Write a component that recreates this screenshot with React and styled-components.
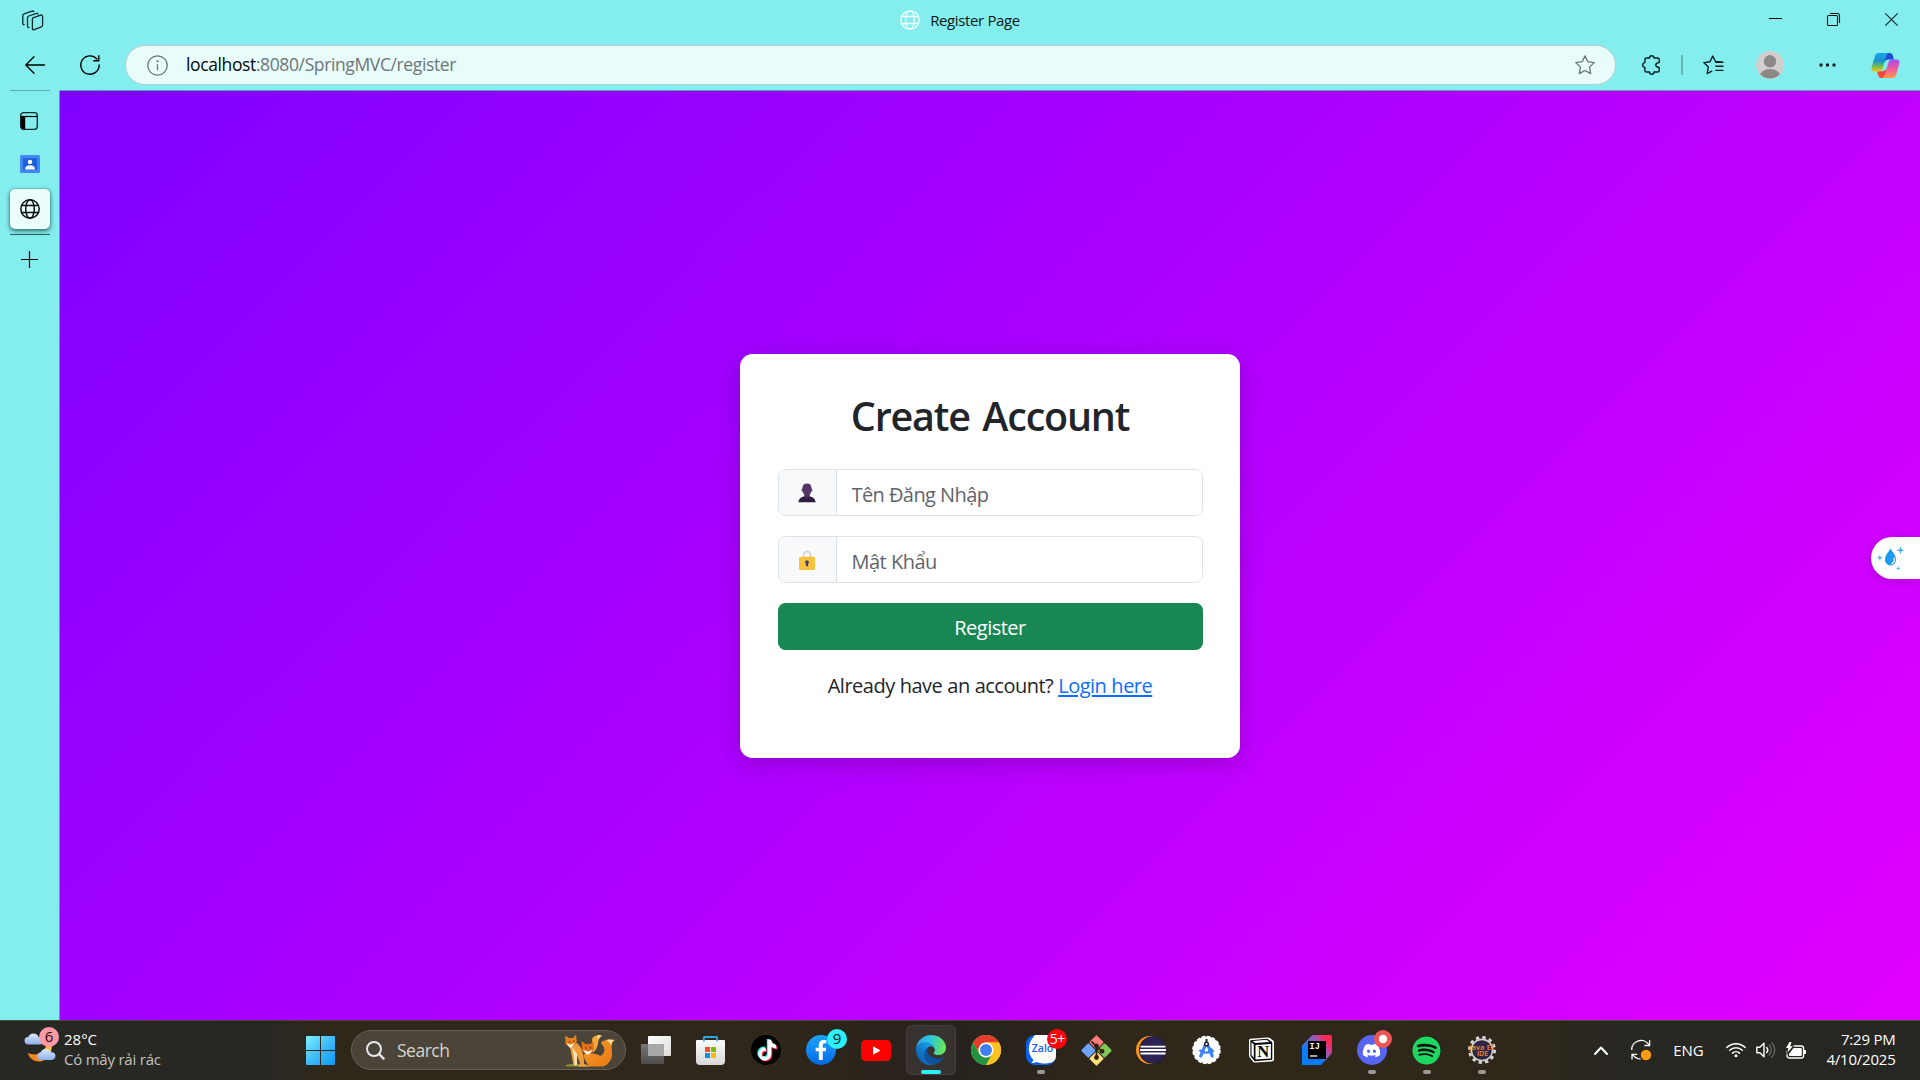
import React from "react";
import styled, { createGlobalStyle } from "styled-components";
import { FaTiktok, FaFacebookF, FaDiscord, FaSpotify } from "react-icons/fa";

const GlobalStyle = createGlobalStyle`
  *, *::before, *::after { box-sizing: border-box; }
  body {
    margin: 0;
    font-family: "Open Sans", "Noto Sans", sans-serif;
    overflow: hidden;
  }
  svg { display: block; flex: none; overflow: visible; }
`;

const Screen = styled.div`
  width: 1920px;
  height: 1080px;
  display: flex;
  flex-direction: column;
  background: #84eeee;
`;

/* ---------- browser chrome ---------- */

const TitleBar = styled.header`
  height: 40px;
  display: grid;
  grid-template-columns: 1fr auto 1fr;
`;

const TitleLeft = styled.div`
  padding: 10px 0 0 22px;
`;

const TabTitle = styled.div`
  display: flex;
  align-items: center;
  gap: 10px;
  height: 40px;
  font-size: 15px;
  letter-spacing: -0.37px;
  color: #0b1717;
`;

const TabLabel = styled.span`
  padding-bottom: 1px;
`;

const WindowControls = styled.div`
  display: flex;
  justify-content: flex-end;
`;

const WindowButton = styled.div`
  width: ${(p) => p.$w || 57.5}px;
  height: 39px;
  display: flex;
  align-items: center;
  justify-content: center;
`;

const Toolbar = styled.div`
  height: 50px;
  display: flex;
  align-items: center;
  padding: 0 5px 0 7px;
`;

const ToolSlot = styled.div`
  width: ${(p) => p.$w || 57}px;
  height: 40px;
  display: flex;
  align-items: center;
  justify-content: center;
`;

const AddressBar = styled.div`
  flex: 1;
  height: 40px;
  margin: 0 7px 0 9px;
  padding: 0 20px 0 21px;
  display: flex;
  align-items: center;
  border: 1px solid #b9cdcd;
  border-radius: 20px;
  background: #e8fcfc;
`;

const Url = styled.div`
  flex: 1;
  margin-left: 18px;
  font-size: 17.5px;
  line-height: 37px;
  padding-bottom: 1px;
  letter-spacing: -0.38px;
  color: #6d7575;
`;

const Host = styled.span`
  color: #050808;
`;

const ToolDivider = styled.div`
  width: 2px;
  height: 20px;
  margin: 0 1px;
  background: #66b6b8;
`;

const Body = styled.div`
  flex: 1;
  display: flex;
`;

const TabStrip = styled.nav`
  width: 59px;
  display: flex;
  flex-direction: column;
  align-items: center;
`;

const StripLine = styled.div`
  width: 40px;
  height: 1px;
  margin-left: 1px;
  margin-top: ${(p) => p.$gap || 0}px;
  background: ${(p) => p.$color || "#5fabac"};
`;

const StripSlot = styled.div`
  width: 60px;
  height: ${(p) => p.$h}px;
  padding-right: ${(p) => p.$shift || 0}px;
  display: flex;
  align-items: center;
  justify-content: center;
`;

const ActiveTab = styled.div`
  width: 40px;
  height: 40px;
  margin: 12px 0 0 1px;
  display: flex;
  align-items: center;
  justify-content: center;
  border-radius: 5px;
  background: #ecfdfd;
  box-shadow: 0 2px 5px rgba(0, 40, 45, 0.65), 0 0 2px rgba(0, 40, 45, 0.4);
`;

/* ---------- page ---------- */

const Page = styled.main`
  position: relative;
  flex: 1;
  display: flex;
  align-items: center;
  justify-content: center;
  border-top: 1px solid #5c9fae;
  border-left: 1px solid #5c9fae;
  background: linear-gradient(135deg, #7f00ff, #e100ff) padding-box;
`;

const Card = styled.form`
  width: 500px;
  height: 404px;
  padding: 37.5px;
  display: flex;
  flex-direction: column;
  border-radius: 12.5px;
  background: #fff;
  box-shadow: 0 5px 25px rgba(0, 0, 0, 0.2);
`;

const Heading = styled.h2`
  height: 48px;
  margin: 0 0 30px;
  font-size: 39.5px;
  font-weight: 600;
  line-height: 51px;
  letter-spacing: -1.2px;
  word-spacing: 3.5px;
  text-align: center;
  color: #212529;
`;

const Field = styled.div`
  height: 47px;
  margin-bottom: 20px;
  display: flex;
  border: 1px solid #dee2e6;
  border-radius: 7.5px;
  overflow: hidden;
`;

const Addon = styled.div`
  width: 58px;
  padding-top: 1px;
  display: flex;
  align-items: center;
  justify-content: center;
  border-right: 1px solid #dee2e6;
  background: #f8f9fa;
`;

const Input = styled.input`
  flex: 1;
  min-width: 0;
  padding: 3px 15px 0;
  border: 0;
  outline: 0;
  background: #fff;
  font: 20px "Open Sans", "Noto Sans", sans-serif;
  letter-spacing: ${(p) => p.$spacing}px;
  &::placeholder {
    color: #5f6469;
    opacity: 1;
  }
`;

const SubmitButton = styled.button`
  height: 47px;
  padding: 2px 0 0;
  border: 0;
  border-radius: 7.5px;
  background: #198754;
  color: #fff;
  font: 20px "Open Sans", "Noto Sans", sans-serif;
  letter-spacing: -0.5px;
`;

const Prompt = styled.p`
  margin: 20px 0 0;
  font-size: 20px;
  line-height: 31px;
  letter-spacing: -0.5px;
  word-spacing: 0.3px;
  text-align: center;
  white-space: nowrap;
  color: #212529;
`;

const Link = styled.a`
  color: #0d6efd;
  text-decoration: underline;
  text-decoration-thickness: 2px;
  text-underline-offset: 2px;
`;

const FloatingTool = styled.div`
  position: absolute;
  right: 0;
  top: 446px;
  width: 49px;
  height: 42px;
  padding: 8px 0 0 4px;
  border-radius: 21px 0 0 21px;
  background: #fff;
  box-shadow: 0 2px 8px rgba(0, 0, 0, 0.18);
`;

/* ---------- taskbar ---------- */

const Taskbar = styled.footer`
  height: 60px;
  padding-bottom: 1px;
  display: flex;
  align-items: center;
  border-top: 1px solid #4a4640;
  background: linear-gradient(90deg, #272723 0, #272723 260px, #2f281a 330px, #2e261a 800px, #28221e 940px, #29231d 1010px, #2f271a 1120px, #2f271a 1520px, #282722 1620px, #262622 100%);
  color: #fff;
`;

const Weather = styled.div`
  width: 280px;
  padding-left: 24px;
  display: flex;
  align-items: center;
`;

const WeatherIcon = styled.div`
  position: relative;
  width: 40px;
  height: 40px;
`;

const WeatherBadge = styled.div`
  position: absolute;
  left: 15px;
  top: -3px;
  width: 20px;
  height: 20px;
  border-radius: 50%;
  background: #ff99a4;
  color: #1b0d0f;
  font-size: 15px;
  line-height: 19px;
  text-align: center;
`;

const Lines = styled.div`
  display: flex;
  flex-direction: column;
  padding-bottom: 3px;
  font-size: 15px;
  line-height: 20px;
  letter-spacing: ${(p) => p.$spacing || 0}px;
  text-align: ${(p) => p.$align || "left"};
  white-space: nowrap;
`;

const Muted = styled.span`
  color: #c3c2c0;
  letter-spacing: -0.22px;
`;

const StartButton = styled.div`
  width: 71px;
  padding-left: 26px;
`;

const SearchBox = styled.div`
  width: 275px;
  height: 40px;
  padding: 0 10px 0 14px;
  display: flex;
  align-items: center;
  border: 1px solid #655f54;
  border-radius: 20px;
  background: #4a4439;
  font-size: 17.5px;
  letter-spacing: -0.5px;
  color: #d6d3ce;
`;

const SearchLabel = styled.span`
  flex: 1;
  margin-left: 12px;
`;

const Apps = styled.div`
  display: flex;
  margin-left: 2px;
`;

const AppSlot = styled.div`
  width: 55.1px;
  height: 50px;
  display: flex;
  justify-content: center;
`;

const AppTile = styled.div`
  position: relative;
  width: 50px;
  height: 50px;
  display: flex;
  align-items: center;
  justify-content: center;
  border-radius: 6px;
  background: ${(p) => (p.$active ? "#38322e" : "transparent")};
  box-shadow: ${(p) => (p.$active ? "inset 0 0 0 1px #443e39" : "none")};
`;

const Indicator = styled.div`
  position: absolute;
  left: 50%;
  bottom: 1px;
  width: ${(p) => (p.$active ? 20 : 8)}px;
  height: 4px;
  transform: translateX(-50%);
  border-radius: 2px;
  background: ${(p) => (p.$active ? "#2cf0fb" : "#9d9992")};
`;

const AppBadge = styled.div`
  position: absolute;
  left: 31px;
  top: 4px;
  width: 20px;
  height: 20px;
  border-radius: 50%;
  background: ${(p) => p.$bg};
  color: ${(p) => p.$fg};
  font-size: ${(p) => p.$size || 15}px;
  line-height: 19px;
  letter-spacing: -0.5px;
  text-align: center;
`;

const LiveBadge = styled.div`
  position: absolute;
  left: 27px;
  top: 5px;
`;

const Disc = styled.div`
  position: relative;
  width: ${(p) => p.$size || 30}px;
  height: ${(p) => p.$size || 30}px;
  display: flex;
  align-items: center;
  justify-content: center;
  border-radius: 50%;
  background: ${(p) => p.$bg};
  color: #fff;
`;

const NoteLayer = styled.div`
  position: absolute;
  left: ${(p) => p.$x}px;
  top: ${(p) => p.$y}px;
  color: ${(p) => p.$color};
`;

const Tray = styled.div`
  margin-left: auto;
  padding-right: 24.5px;
  display: flex;
  align-items: center;
`;

const TraySlot = styled.div`
  width: ${(p) => p.$w}px;
  display: flex;
  align-items: center;
  justify-content: center;
  font-size: 15px;
`;

const ClockSlot = styled.div`
  width: 81px;
  display: flex;
  justify-content: flex-end;
`;

/* ---------- drawings ---------- */

const Globe = ({ color, width = 1.5 }) => (
  <svg width="20" height="20" viewBox="0 0 20 20" fill="none" stroke={color} strokeWidth={width}>
    <circle cx="10" cy="10" r="9.2" />
    <ellipse cx="10" cy="10" rx="4.3" ry="9.2" />
    <path d="M1.5 6.5h17M1.5 13.5h17" />
  </svg>
);

const WorkspacesIcon = () => (
  <svg width="22" height="22" viewBox="0 0 22 22" fill="none" stroke="#0c2a2b" strokeWidth="1.3" strokeLinejoin="round" strokeLinecap="round">
    <path d="M11.400 7.700 18.800 5.100c1-.3 1.800.2 1.800 1.200v8.800c0 .8-.4 1.400-1.200 1.700l-7.200 2.900c-1 .4-1.800-.1-1.800-1.100V9.300c0-.8.3-1.300 1-1.600z" />
    <path d="M16 4.100c-.2-.7-.8-1-1.600-.7L6.800 6c-.8.3-1.300 1-1.300 1.800v8.600c0 .8.700 1.300 1.500 1.100" />
    <path d="M11.700 1.700c-.3-.7-.9-.9-1.700-.6L2.100 3.800C1.300 4.100.8 4.800.8 5.600v8c0 .8.6 1.300 1.400 1.100" />
  </svg>
);

const Star = ({ color }) => (
  <svg width="20" height="20" viewBox="0 0 20 20" fill="none" stroke={color} strokeWidth="1.3" strokeLinejoin="round">
    <path d="m10 .9 2.800 5.800 6.400.9-4.700 4.500 1.200 6.500-5.700-3.100-5.700 3.100 1.200-6.500L.8 7.600l6.400-.9z" />
  </svg>
);

const FavoritesIcon = () => (
  <svg width="20" height="20" viewBox="0 0 20 20" fill="none" stroke="#0b1f20" strokeWidth="1.4" strokeLinejoin="round" strokeLinecap="round">
    <path d="M18.800 7.200 12.500 6.500 9.700 1 7 6.700.8 7.600l4.500 4.500-1.100 6.500 4.600-2.400" />
    <path d="M12.800 7.200H20M12.800 11.300H20M12.800 15.400H20" />
  </svg>
);

const PuzzleIcon = () => (
  <svg width="19" height="20" viewBox="0 0 19 20" fill="none" stroke="#0b1f20" strokeWidth="1.4" strokeLinejoin="round">
    <path d="M4.500 3h3c0-1.500 1-2.300 2.200-2.300S12 1.500 12 3h3.500c1 0 1.700.6 1.700 1.600v3c-2 0-3.400 1-3.400 2.400s1.400 2.400 3.400 2.400v3c0 1-.7 1.600-1.700 1.600H12c0 1.500-1 2.300-2.300 2.300S7.500 18.500 7.500 17h-3c-1 0-1.600-.6-1.600-1.600V12.400C1.400 12.200.7 11.200.7 10s.8-2.200 2.200-2.400v-3C2.900 3.600 3.500 3 4.500 3z" />
  </svg>
);

const CopilotIcon = () => (
  <svg width="29" height="27" viewBox="0 0 29 27">
    <defs>
      <linearGradient id="cpA" x1="0" y1="0" x2="0" y2="1">
        <stop offset="0" stopColor="#17a5ec" />
        <stop offset=".45" stopColor="#1d93c8" />
        <stop offset=".75" stopColor="#7fbf4d" />
        <stop offset="1" stopColor="#f5c817" />
      </linearGradient>
      <linearGradient id="cpB" x1="0" y1="0" x2="0" y2="1">
        <stop offset="0" stopColor="#a04ff0" />
        <stop offset=".5" stopColor="#f0599b" />
        <stop offset="1" stopColor="#ff9b4a" />
      </linearGradient>
    </defs>
    <path d="M14 1h5c1.600 0 2.300.9 2.800 2.400L23 7.500h-5.500c-2 0-3 .8-3.600 2.700z" fill="#1a4fd0" />
    <path d="M15 26H10c-1.600 0-2.200-.9-2.700-2.400L6 19.300h5.300c2 0 3-.8 3.700-2.700z" fill="#f4473c" />
    <path d="M7.500 1H18c-1.700.4-2.300 1.700-2.900 3.700l-3.400 11.500c-.7 2.200-2 3.300-4.300 3.300H3.500C.8 19.500 0 17.600.7 15L4 4C4.600 2 5.700 1 7.500 1z" fill="url(#cpA)" />
    <path d="M21.500 26H11c1.700-.4 2.300-1.700 2.900-3.700l3.400-11.500c.7-2.200 2-3.300 4.300-3.300h3.900c2.700 0 3.500 1.900 2.800 4.500L25 23c-.6 2-1.700 3-3.500 3z" fill="url(#cpB)" />
  </svg>
);

const Avatar = () => (
  <svg width="28" height="28" viewBox="0 0 28 28">
    <defs><clipPath id="av"><circle cx="14" cy="14" r="13.5" /></clipPath></defs>
    <circle cx="14" cy="14" r="14" fill="#d1cfcd" />
    <g clipPath="url(#av)" fill="#8b8886">
      <circle cx="14" cy="10.3" r="6.2" />
      <ellipse cx="14" cy="26" rx="10.5" ry="8" />
    </g>
  </svg>
);

const PersonEmoji = () => (
  <svg width="18" height="20" viewBox="0 0 18 20">
    <path d="M.4 19.300c.3-3 1.800-4.600 4.600-5.600l4-1.500 4 1.500c2.800 1 4.300 2.600 4.600 5.600z" fill="#321b41" />
    <path d="M6.300 11h5.400v2.600L9 15.400l-2.700-1.800z" fill="#4a2d5a" />
    <path d="M9 .6c3 0 4.600 1.900 4.600 5 0 .4.800.5.800 1.400S13.800 8.400 13.300 8.600C12.700 11 11 12.900 9 12.900S5.300 11 4.700 8.600C4.200 8.400 3.600 7.900 3.600 7s.8-1 .8-1.400c0-3.100 1.600-5 4.600-5z" fill="#533566" />
  </svg>
);

const LockEmoji = () => (
  <svg width="16" height="20" viewBox="0 0 16 20">
    <path d="M4.700 8V4.700a3.400 3.400 0 0 1 6.800 0V8" fill="none" stroke="#d3d3d3" strokeWidth="1.8" />
    <rect x="0" y="6.7" width="16" height="13.3" rx="1.6" fill="#f9c23c" />
    <path d="M8 10.200a2 2 0 0 1 1.100 3.600v2.500H6.900v-2.500A2 2 0 0 1 8 10.200z" fill="#433b6b" />
  </svg>
);

const DropletIcon = () => (
  <svg width="40" height="26" viewBox="0 0 40 26">
    <path d="M15.500 3.500c2 3.500 5.600 7 5.600 11.300a5.600 5.600 0 0 1-11.200 0c0-4.300 3.600-7.800 5.600-11.300z" fill="#1e9bf0" />
    <path d="M19.300 13.500c.5 2.500-.4 4.200-2.300 5" fill="none" stroke="#fff" strokeWidth="1.4" strokeLinecap="round" />
    <path d="M25.500 1l1 3.300 3.300 1-3.300 1-1 3.300-1-3.300-3.300-1 3.300-1zM4.800 9.500l.8 2.500 2.500.8-2.500.8-.8 2.500-.8-2.500-2.500-.8 2.500-.8zM23.200 21l.6 1.700 1.700.6-1.700.6-.6 1.700-.6-1.700-1.700-.6 1.700-.6z" fill="#4db3f5" />
  </svg>
);

const CloudMoon = () => (
  <svg width="36" height="40" viewBox="0 0 36 40">
    <defs>
      <linearGradient id="cl" x1="0" y1="0" x2="0" y2="1">
        <stop offset="0" stopColor="#dbe8fb" />
        <stop offset="1" stopColor="#8fb0ea" />
      </linearGradient>
      <linearGradient id="mn" x1="1" y1="0" x2="0" y2="1">
        <stop offset="0" stopColor="#ffca3a" />
        <stop offset="1" stopColor="#ee7420" />
      </linearGradient>
    </defs>
    <path d="M27.500 12c2 9-3.500 19.500-12.500 19.500-5.500 0-9.500-3-11.300-8.500 9 3.500 17 .5 18.800-9z" fill="url(#mn)" />
    <path d="M4.500 14.500a3.800 3.800 0 0 1-.3-7.600 5.600 5.600 0 0 1 10.500.3c3.300-.2 5 1.600 5 3.700s-1.600 3.600-3.700 3.600z" fill="url(#cl)" />
    <path d="M17 30a3.900 3.900 0 0 1-.3-7.700 5.800 5.800 0 0 1 10.700 0c2.600 0 4.100 1.700 4.100 3.800 0 2.200-1.600 3.900-3.900 3.900z" fill="url(#cl)" />
  </svg>
);

const WindowsLogo = () => (
  <svg width="29" height="29" viewBox="0 0 29 29">
    <defs>
      <linearGradient id="wl" gradientUnits="userSpaceOnUse" x1="0" y1="0" x2="29" y2="29">
        <stop offset="0" stopColor="#7df0ff" />
        <stop offset=".5" stopColor="#3fbcf9" />
        <stop offset="1" stopColor="#0c96f5" />
      </linearGradient>
    </defs>
    <path d="M1 0h13v14H0V1a1 1 0 0 1 1-1zM15 0h13a1 1 0 0 1 1 1v13H15zM0 15h14v14H1a1 1 0 0 1-1-1zM15 15h14v13a1 1 0 0 1-1 1H15z" fill="url(#wl)" />
  </svg>
);

const Foxes = () => (
  <svg width="51" height="33" viewBox="0 0 51 33">
    <defs>
      <linearGradient id="fx" x1="0" y1="0" x2="1" y2="1">
        <stop offset="0" stopColor="#f39a2e" />
        <stop offset="1" stopColor="#e8780f" />
      </linearGradient>
    </defs>
    <path d="M1 31.500c6-2.500 14-2.500 22-1v2H3z" fill="#8b8b2f" />
    <path d="M26 14c2-3 2.500-5 2-8.500C28.500 2 32.500 .5 38 2c-3 1.500-3.500 4-4 7.500-.4 3-2 7-5 9z" fill="#f5a737" />
    <path d="M33 1.200c2-.6 4-.2 5 .8-2 .6-3 2-3.600 4z" fill="#fbd98e" />
    <path d="M5.500 10l7.500-1c4 4 7.500 9 7 22.500h-3l-4-10-1 10H9.500z" fill="#ee9a38" />
    <path d="M8 13c1.500 6 2.500 12 2.500 18.500H13V20z" fill="#fbe3b8" />
    <path d="M1 1.500 4.800 4h4.200L12 .5l.7 6.500c-.5 3-3 5.500-6.200 7.500C5 12 .5 11 1.500 7z" fill="#e9801f" />
    <path d="M2.500 9.500 7 10.500l3.500-1.500c-1 2-2.200 4-4 5.500z" fill="#fff0d8" />
    <path d="M20 20c6-1.500 12-1 16.500 2 5-3 5-8 1.500-11.500C35 8 40 5 50.500 6c-3.500 3-3 6-2.500 11 1 8-3 13-8.500 15.500H25c-2-4-6-8-5-12.500z" fill="url(#fx)" />
    <path d="M42 6c3-.7 6-.6 8.500 0-2.500 1.500-3.200 3.500-3 6-.8-2.500-2.700-4.500-5.500-6z" fill="#fbd98e" />
    <path d="m17.500 7 4 3h4.500l3.500-2.500.5 6.500c-.5 3-2.500 5-5.500 7C22 19.500 17.500 17.500 18 14z" fill="#e0701a" />
    <path d="M19 16l5 1.500 4.500-1.500c-1 2-2.500 4-4.500 5-2.500-1-4-3-5-5z" fill="#fff0d8" />
    <circle cx="5.5" cy="7.8" r=".7" fill="#432408" /><circle cx="9.8" cy="7.3" r=".7" fill="#432408" />
    <circle cx="22" cy="14" r=".7" fill="#432408" /><circle cx="26.5" cy="13.8" r=".7" fill="#432408" />
    <path d="M14 31c4-1.500 8-1 12 1.500H14z" fill="#f3a338" />
  </svg>
);

const TaskViewIcon = () => (
  <svg width="30" height="28" viewBox="0 0 30 28">
    <defs>
      <linearGradient id="tv" x1="0" y1="0" x2="1" y2="1"><stop offset="0" stopColor="#fff" /><stop offset="1" stopColor="#dcdcdc" /></linearGradient>
      <linearGradient id="tv2" x1="0" y1="0" x2="0" y2="1"><stop offset="0" stopColor="#777573" /><stop offset="1" stopColor="#504e4c" /></linearGradient>
    </defs>
    <rect x="0" y="8" width="23" height="20" rx="1" fill="url(#tv2)" />
    <rect x="7" y="0" width="23" height="20" rx="1" fill="url(#tv)" />
    <path d="M7 8h16v12H8a1 1 0 0 1-1-1z" fill="#a9a8a7" />
  </svg>
);

const StoreIcon = () => (
  <svg width="29" height="29" viewBox="0 0 29 29">
    <defs><linearGradient id="st" x1="0" y1="0" x2="0" y2="1"><stop offset="0" stopColor="#fbfbfb" /><stop offset="1" stopColor="#d8d8d8" /></linearGradient></defs>
    <path d="M7.800 5V2a1 1 0 0 1 1-1h11.400a1 1 0 0 1 1 1v3" fill="none" stroke="#2ba9df" strokeWidth="1.9" />
    <path d="M1 4h27a1 1 0 0 1 1 1v20a4 4 0 0 1-4 4H4a4 4 0 0 1-4-4V5a1 1 0 0 1 1-1z" fill="url(#st)" />
    <path d="M7.800 4.200v1.300M21.200 4.200v1.300" stroke="#2ba9df" strokeWidth="1.9" />
    <path d="M9 11h5v5H9z" fill="#f25022" /><path d="M15 11h5v5h-5z" fill="#7fba00" />
    <path d="M9 17h5v5H9z" fill="#0f8fd8" /><path d="M15 17h5v5h-5z" fill="#ffb900" />
  </svg>
);

const TikTokIcon = () => (
  <Disc $bg="#000">
    <NoteLayer $x={5.3} $y={4.2} $color="#25f4ee"><FaTiktok size={20.5} /></NoteLayer>
    <NoteLayer $x={6.9} $y={5.5} $color="#fe2c55"><FaTiktok size={20.5} /></NoteLayer>
    <NoteLayer $x={6.1} $y={4.8} $color="#fff"><FaTiktok size={20.5} /></NoteLayer>
  </Disc>
);

const YouTubeIcon = () => (
  <svg width="30" height="21" viewBox="0 0 30 21">
    <rect width="30" height="21" rx="4.5" fill="#f00" />
    <path d="M12 6.200v8.600l7.600-4.300z" fill="#fff" />
  </svg>
);

const EdgeIcon = () => (
  <svg width="30" height="30" viewBox="0 0 256 256">
    <defs>
      <linearGradient id="e1" x1="63" y1="178" x2="241" y2="178" gradientUnits="userSpaceOnUse"><stop offset="0" stopColor="#0c59a4" /><stop offset="1" stopColor="#114a8b" /></linearGradient>
      <linearGradient id="e2" x1="158" y1="100" x2="46" y2="222" gradientUnits="userSpaceOnUse"><stop offset="0" stopColor="#1b9de2" /><stop offset=".4" stopColor="#1387d6" /><stop offset="1" stopColor="#0c63b4" /></linearGradient>
      <linearGradient id="e3" x1="20" y1="60" x2="250" y2="100" gradientUnits="userSpaceOnUse"><stop offset="0" stopColor="#28a9e0" /><stop offset=".4" stopColor="#2fc2df" /><stop offset=".7" stopColor="#4bd49a" /><stop offset="1" stopColor="#69e84f" /></linearGradient>
    </defs>
    <path d="M231 190c-3 2-7 3-11 5a102 102 0 0 1-36 6c-48 0-89-33-89-75 0-12 6-22 16-27-43 2-54 47-54 73 0 75 69 82 84 82 8 0 20-2 27-5l2 0a128 128 0 0 0 66-53c3-4-1-8-5-6z" fill="url(#e1)" />
    <path d="M105 241a79 79 0 0 1-22-21 81 81 0 0 1 29-120c3-1 8-4 16-4a33 33 0 0 1 26 13 33 33 0 0 1 6 19c0 0 23-78-80-78C37 50 0 92 0 127a132 132 0 0 0 12 56 128 128 0 0 0 157 67 76 76 0 0 1-64-9z" fill="url(#e2)" />
    <path d="M152 149c-1 1-3 2-3 5 0 3 2 6 5 8 15 10 42 9 42 9a60 60 0 0 0 30-9 62 62 0 0 0 30-53c0-22-8-36-11-43C225 26 182 0 128 0A128 128 0 0 0 0 126c0-36 37-66 80-66 4 0 23 0 42 10 16 8 25 19 31 29 7 11 8 26 8 32 0 5-3 13-9 18z" fill="url(#e3)" />
  </svg>
);

const ChromeIcon = () => (
  <svg width="30" height="30" viewBox="0 0 48 48">
    <circle cx="24" cy="24" r="24" fill="#fcc934" />
    <path d="M3.200 12A24 24 0 0 1 44.800 12H24a12 12 0 0 0-10.400 18z" fill="#e33b2e" />
    <path d="M3.200 12 13.600 30a12 12 0 0 0 20.800 0L24 48A24 24 0 0 1 3.200 12z" fill="#229342" />
    <path d="M24 12h20.800A24 24 0 0 1 24 48l10.400-18A12 12 0 0 0 24 12z" fill="#fcc31e" />
    <circle cx="24" cy="24" r="12" fill="#fff" />
    <circle cx="24" cy="24" r="9.6" fill="#3c80f0" />
  </svg>
);

const ZaloIcon = () => (
  <svg width="30" height="30" viewBox="0 0 30 30">
    <rect width="30" height="30" rx="9" fill="#0a62f5" />
    <path d="M9 0h12a9 9 0 0 1 9 9v12a7 7 0 0 1-7 7c-5 1-9 .5-12-1l-5.500 1.200L7.500 25C1.500 19 .5 9 9 0z" fill="#fff" />
    <text x="16.500" y="17" textAnchor="middle" fontFamily="Open Sans, sans-serif" fontWeight="600" fontSize="10.500" fill="#0a62f5">Zalo</text>
  </svg>
);

const GitIcon = () => (
  <svg width="31" height="31" viewBox="0 0 31 31">
    <g transform="rotate(45 15.5 15.5)">
      <rect x="4.5" y="4.5" width="10.5" height="10.5" rx="1" fill="#ff7a7e" />
      <rect x="16" y="4.5" width="10.5" height="10.5" rx="1" fill="#80c758" />
      <rect x="4.5" y="16" width="10.5" height="10.5" rx="1" fill="#6fa3ff" />
      <rect x="16" y="16" width="10.5" height="10.5" rx="1" fill="#ffe07a" />
    </g>
    <path d="M10.500 6.500l5 5V23M15.500 11.500l5.500 5" stroke="#33210f" strokeWidth="1.8" fill="none" />
    <circle cx="15.5" cy="11" r="2.4" fill="#33210f" /><circle cx="21" cy="16.3" r="2.4" fill="#33210f" /><circle cx="15.5" cy="22.5" r="2.4" fill="#33210f" />
  </svg>
);

const EclipseIcon = () => (
  <svg width="30" height="28" viewBox="0 0 30 28">
    <circle cx="14" cy="14" r="14" fill="#f7941e" />
    <circle cx="16.8" cy="14" r="13.8" fill="#231c33" />
    <circle cx="17" cy="14" r="12.7" fill="#2c2255" />
    <path d="M4.500 10.600h25M4 14h26M4.500 17.500h25" stroke="#fff" strokeWidth="1.9" />
  </svg>
);

const AndroidStudioIcon = () => (
  <svg width="29" height="30" viewBox="0 0 29 30">
    <circle cx="14.5" cy="15" r="13.4" fill="#fff" stroke="#fff" strokeWidth="1.8" strokeDasharray="3.5 1.76" />
    <path d="M17 12.500c3 0 5 2.300 5 5h-6z" fill="#34a853" />
    <path d="M13.700 9 8.800 21M15.300 9l4.900 12" stroke="#3b82f6" strokeWidth="3.2" strokeLinecap="round" />
    <path d="M7.500 15c3 3.500 10 3.500 13.500 0" fill="none" stroke="#3b82f6" strokeWidth="2.2" />
    <path d="M14.500 4v3" stroke="#223" strokeWidth="2" />
    <circle cx="14.5" cy="9" r="1.8" fill="#fff" stroke="#223" strokeWidth="1.4" />
  </svg>
);

const NotionIcon = () => (
  <svg width="25" height="26" viewBox="0 0 25 26">
    <path d="M1.500 1.800 18 .4c1.300-.1 2 .1 2.900.7l3 2.200c.8.600 1.100 1.100 1.100 2V22c0 1.600-.7 2.400-2.300 2.500L6.500 25.600c-1.200.1-1.900-.2-2.600-1.100L.8 20.600C.2 19.800 0 19.200 0 18.300V3.500c0-1 .5-1.600 1.500-1.700z" fill="#fff" />
    <path d="M1.600 3.200 18.300 1.700l5 3.500V22.800L5.600 24.200 1.400 19V3.200z" fill="#050505" />
    <path d="M3.500 3.900 17.600 2.800 20.500 5 6.300 6z" fill="#fff" />
    <path d="M2.500 5.200 4.800 7.400v13.400L2.500 18z" fill="#fff" />
    <path d="M6.500 8.100 21.900 7.100V21.500L6.500 22.600z" fill="#fff" />
    <text x="14.200" y="20.300" textAnchor="middle" fontFamily="Liberation Serif, serif" fontWeight="700" fontSize="16.500" fill="#050505">N</text>
  </svg>
);

const IntelliJIcon = () => (
  <svg width="30" height="30" viewBox="0 0 30 30">
    <defs>
      <linearGradient id="ij" x1="0.1" y1=".7" x2="1" y2="0"><stop offset="0" stopColor="#0a84ff" /><stop offset=".5" stopColor="#8b5cc4" /><stop offset=".8" stopColor="#fe2857" /><stop offset="1" stopColor="#fe2857" /></linearGradient>
    </defs>
    <path d="M11.500 0H28.500A1.500 1.500 0 0 1 30 1.500V17c0 1-.3 1.600-1 2.300L20 28.800c-.8.8-1.400 1.200-2.500 1.200h-16A1.500 1.500 0 0 1 0 28.500V12c0-1 .3-1.700 1-2.400L9 1.200C9.800.4 10.500 0 11.500 0z" fill="url(#ij)" />
    <path d="M0 14 6 8v16h17l-3 4.800c-.8.800-1.400 1.200-2.500 1.200h-16A1.500 1.500 0 0 1 0 28.500z" fill="#087cfa" />
    <rect x="6" y="6" width="18" height="18" fill="#000" />
    <text x="7.600" y="14.200" fontFamily="Liberation Mono, monospace" fontWeight="700" fontSize="8.500" fill="#fff">IJ</text>
    <path d="M8 21h7.200" stroke="#fff" strokeWidth="1.3" />
  </svg>
);

const LiveDot = () => (
  <svg width="18" height="18" viewBox="0 0 18 18">
    <circle cx="9" cy="9" r="9" fill="#f05454" />
    <circle cx="9" cy="9" r="4.2" fill="#fff" />
  </svg>
);

const JavaEEIcon = () => (
  <svg width="30" height="28" viewBox="0 0 30 28">
    <circle cx="15" cy="14" r="12.6" fill="none" stroke="#d8d8d8" strokeWidth="2.8" strokeDasharray="3.3 3.3" />
    <circle cx="15" cy="14" r="10.6" fill="#2a2433" stroke="#cfcfcf" strokeWidth="1.6" />
    <circle cx="15" cy="14" r="8" fill="#33264c" />
    <text x="2.500" y="13.500" fontFamily="Open Sans, sans-serif" fontWeight="600" fontSize="7" fill="#f58a1f" textLength="25.500" lengthAdjust="spacing">Java EE</text>
    <text x="15.500" y="19.800" textAnchor="middle" fontFamily="Open Sans, sans-serif" fontWeight="600" fontSize="7" fill="#f58a1f">IDE</text>
  </svg>
);

const SyncIcon = () => (
  <svg width="20" height="20" viewBox="0 0 20 20" fill="none" stroke="#fff" strokeWidth="1.3">
    <path d="M.7 10A9.300 9.300 0 0 1 18 5M18.600.3v5.200h-5.200M1 19.600v-5.200h5.200M1.800 14.800c2 2.600 4.200 4 7.800 4.300" />
    <circle cx="15" cy="15" r="5.2" fill="#ff9b0f" stroke="none" />
  </svg>
);

const WifiIcon = () => (
  <svg width="20" height="16" viewBox="0 0 20 16" fill="none" stroke="#fff" strokeWidth="1.5" strokeLinecap="round">
    <path d="M.9 5.400a13 13 0 0 1 18.200 0M3.700 8.300a9 9 0 0 1 12.600 0M6.500 11.100a5 5 0 0 1 7 0" />
    <circle cx="10" cy="13.7" r="1.5" fill="#fff" stroke="none" />
  </svg>
);

const SpeakerIcon = () => (
  <svg width="20" height="16" viewBox="0 0 20 16" fill="none" strokeWidth="1.4" strokeLinecap="round" strokeLinejoin="round">
    <path d="M.8 5.300h3L8 1.300v13.400l-4.200-4h-3z" stroke="#fff" />
    <path d="M10.700 5.500a3.700 3.700 0 0 1 0 5" stroke="#fff" />
    <path d="M13.200 3a7.300 7.300 0 0 1 0 10M15.900.8a10.600 10.600 0 0 1 0 14.400" stroke="#686662" />
  </svg>
);

const BatteryIcon = () => (
  <svg width="20" height="17" viewBox="0 0 20 17">
    <path d="M7 4h8.300a2.300 2.300 0 0 1 2.300 2.300v7.400a2.300 2.300 0 0 1-2.300 2.300H3.300A2.300 2.300 0 0 1 1 13.700V9" fill="none" stroke="#fff" strokeWidth="1.3" />
    <path d="M7.500 6h7.300a1 1 0 0 1 1 1v6a1 1 0 0 1-1 1H4a1 1 0 0 1-1-1v-1z" fill="#fff" />
    <path d="M18 8h1.200a.8.8 0 0 1 .8.8v2.400a.8.8 0 0 1-.8.8H18z" fill="#fff" />
    <path d="M3.500 0 0 6h2.300L1.500 10.500 6.700 4.300H4.300L5.500 0z" fill="#fff" stroke="#262622" strokeWidth="1.6" />
    <path d="M3.500 0 0 6h2.300L1.500 10.500 6.700 4.300H4.300L5.500 0z" fill="#fff" />
  </svg>
);

const TASKBAR_APPS = [
  { id: "taskview", icon: <TaskViewIcon /> },
  { id: "store", icon: <StoreIcon /> },
  { id: "tiktok", icon: <TikTokIcon /> },
  {
    id: "facebook",
    icon: <Disc $bg="linear-gradient(#1aa5fb, #0668e4)"><FaFacebookF size={20} /></Disc>,
    badge: <AppBadge $bg="#2cf0fb" $fg="#001a1c">9</AppBadge>,
  },
  { id: "youtube", icon: <YouTubeIcon /> },
  { id: "edge", icon: <EdgeIcon />, active: true, running: true },
  { id: "chrome", icon: <ChromeIcon /> },
  {
    id: "zalo",
    icon: <ZaloIcon />,
    badge: <AppBadge $bg="#f80808" $fg="#fff" $size={14}>5+</AppBadge>,
    running: true,
  },
  { id: "git", icon: <GitIcon /> },
  { id: "eclipse", icon: <EclipseIcon /> },
  { id: "studio", icon: <AndroidStudioIcon /> },
  { id: "notion", icon: <NotionIcon /> },
  { id: "intellij", icon: <IntelliJIcon /> },
  {
    id: "discord",
    icon: <Disc $bg="#5865f2"><FaDiscord size={19} /></Disc>,
    badge: <LiveBadge><LiveDot /></LiveBadge>,
    running: true,
  },
  { id: "spotify", icon: <Disc $bg="#101010" $size={28}><FaSpotify size={29} color="#1ed760" /></Disc>, running: true },
  { id: "javaee", icon: <JavaEEIcon />, running: true },
];

export default function App() {
  return (
    <Screen>
      <GlobalStyle />
      <TitleBar>
        <TitleLeft><WorkspacesIcon /></TitleLeft>
        <TabTitle>
          <Globe color="#f2ffff" width={1.3} />
          <TabLabel>Register Page</TabLabel>
        </TabTitle>
        <WindowControls>
          <WindowButton $w={59}>
            <svg width="13" height="13" viewBox="0 0 13 13"><path d="M0 5.500h13" stroke="#000" /></svg>
          </WindowButton>
          <WindowButton>
            <svg width="13" height="13" viewBox="0 0 13 13" fill="none" stroke="#0a1616" strokeWidth="1.1">
              <rect x=".5" y="2.5" width="10" height="10" rx="1" />
              <path d="M3 .5h7.500a2 2 0 0 1 2 2V10" />
            </svg>
          </WindowButton>
          <WindowButton>
            <svg width="13" height="13" viewBox="0 0 13 13"><path d="M.3.300l12.400 12.400M12.700.3.3 12.700" stroke="#0a2a2b" strokeWidth="1.2" /></svg>
          </WindowButton>
        </WindowControls>
      </TitleBar>

      <Toolbar>
        <ToolSlot $w={56}>
          <svg width="20" height="18" viewBox="0 0 20 18" fill="none" stroke="#000" strokeWidth="1.3" strokeLinecap="round" strokeLinejoin="round">
            <path d="M19.500 9H.8M9 .8.8 9 9 17.200" />
          </svg>
        </ToolSlot>
        <ToolSlot $w={53}>
          <svg width="20" height="20" viewBox="0 0 20 20" fill="none" stroke="#000" strokeWidth="1.4" strokeLinecap="round" strokeLinejoin="round">
            <path d="M19.200 10A9.200 9.200 0 1 1 16.900 4M18.800.8v5h-5" />
          </svg>
        </ToolSlot>
        <AddressBar>
          <svg width="21" height="21" viewBox="0 0 21 21" fill="none" stroke="#6b7272" strokeWidth="1.3">
            <circle cx="10.5" cy="10.5" r="9.7" />
            <path d="M10.500 9.200v6" />
            <circle cx="10.5" cy="6.3" r=".5" />
          </svg>
          <Url><Host>localhost</Host>:8080/SpringMVC/register</Url>
          <Star color="#6b7272" />
        </AddressBar>
        <ToolSlot $w={57}><PuzzleIcon /></ToolSlot>
        <ToolDivider />
        <ToolSlot $w={57}><FavoritesIcon /></ToolSlot>
        <ToolSlot $w={57}><Avatar /></ToolSlot>
        <ToolSlot $w={58}>
          <svg width="17" height="4" viewBox="0 0 17 4" fill="#0b1f20">
            <circle cx="2" cy="2" r="1.7" /><circle cx="8.5" cy="2" r="1.7" /><circle cx="15" cy="2" r="1.7" />
          </svg>
        </ToolSlot>
        <ToolSlot $w={59}><CopilotIcon /></ToolSlot>
      </Toolbar>

      <Body>
        <TabStrip>
          <StripLine />
          <StripSlot $h={60} $shift={1}>
            <svg width="18" height="18" viewBox="0 0 18 18">
              <rect x=".7" y=".7" width="16.6" height="16.6" rx="2.8" fill="none" stroke="#0b2a2b" strokeWidth="1.3" />
              <path d="M.8 4h4.400v13.300H3A2.300 2.300 0 0 1 .8 15z" fill="#000" />
              <path d="M.8 4.500h16.400" stroke="#000" strokeWidth="1.2" />
            </svg>
          </StripSlot>
          <StripSlot $h={26}>
            <svg width="20" height="18" viewBox="0 0 20 18">
              <rect width="20" height="18" rx="1.5" fill="#4287f5" />
              <rect x="3" y="3" width="14" height="12" fill="#1a62d6" />
              <circle cx="10" cy="6.9" r="2.2" fill="#fff" />
              <path d="M5 14.500c0-3 2-4.200 5-4.200s5 1.200 5 4.200z" fill="#fff" />
            </svg>
          </StripSlot>
          <ActiveTab><Globe color="#0a0f0f" width={1.5} /></ActiveTab>
          <StripLine $gap={5} $color="#2c5f60" />
          <StripSlot $h={48} $shift={1}>
            <svg width="17" height="17" viewBox="0 0 17 17"><path d="M0 8.500h17M8.500 0v17" stroke="#000" strokeWidth="1.2" /></svg>
          </StripSlot>
        </TabStrip>

        <Page>
          <Card>
            <Heading>Create Account</Heading>
            <Field>
              <Addon><PersonEmoji /></Addon>
              <Input placeholder="Tên Đăng Nhập" $spacing={-0.57} />
            </Field>
            <Field>
              <Addon><LockEmoji /></Addon>
              <Input placeholder="Mật Khẩu" $spacing={-0.5} />
            </Field>
            <SubmitButton type="button">Register</SubmitButton>
            <Prompt>Already have an account? <Link>Login here</Link></Prompt>
          </Card>
          <FloatingTool><DropletIcon /></FloatingTool>
        </Page>
      </Body>

      <Taskbar>
        <Weather>
          <WeatherIcon>
            <CloudMoon />
            <WeatherBadge>6</WeatherBadge>
          </WeatherIcon>
          <Lines>
            <span>28°C</span>
            <Muted>Có mây rải rác</Muted>
          </Lines>
        </Weather>
        <StartButton><WindowsLogo /></StartButton>
        <SearchBox>
          <svg width="19" height="19" viewBox="0 0 19 19" fill="none" stroke="#e4e6ea" strokeLinecap="round">
            <circle cx="8" cy="8" r="7" strokeWidth="2" />
            <path d="M13.200 13.200l4.400 4.400" strokeWidth="2.4" />
          </svg>
          <SearchLabel>Search</SearchLabel>
          <Foxes />
        </SearchBox>
        <Apps>
          {TASKBAR_APPS.map((app) => (
            <AppSlot key={app.id}>
              <AppTile $active={app.active}>
                {app.icon}
                {app.badge}
                {app.running && <Indicator $active={app.active} />}
              </AppTile>
            </AppSlot>
          ))}
        </Apps>
        <Tray>
          <TraySlot $w={40}>
            <svg width="14" height="9" viewBox="0 0 14 9" fill="none" stroke="#fff" strokeWidth="2" strokeLinecap="round" strokeLinejoin="round">
              <path d="M1 8l6-6.500L13 8" />
            </svg>
          </TraySlot>
          <TraySlot $w={40}><SyncIcon /></TraySlot>
          <TraySlot $w={56}>ENG</TraySlot>
          <TraySlot $w={38}><WifiIcon /></TraySlot>
          <TraySlot $w={22}><SpeakerIcon /></TraySlot>
          <TraySlot $w={38}><BatteryIcon /></TraySlot>
          <ClockSlot>
            <Lines $spacing={-0.22} $align="right">
              <span>7:29 PM</span>
              <span>4/10/2025</span>
            </Lines>
          </ClockSlot>
        </Tray>
      </Taskbar>
    </Screen>
  );
}
